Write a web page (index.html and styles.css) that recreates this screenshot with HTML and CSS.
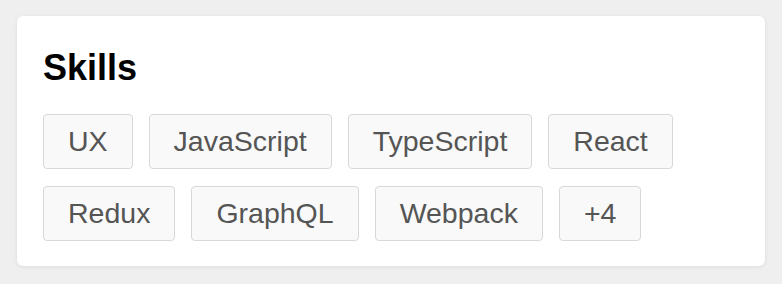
FILE: index.html
```html
<!DOCTYPE html>
<html>
<head>
<meta charset="utf-8">
<link rel="stylesheet" href="styles.css">
</head>
<body>
<section class="card">
  <h2 class="title">Skills</h2>
  <ul class="tags">
    <li class="tag">UX</li>
    <li class="tag">JavaScript</li>
    <li class="tag">TypeScript</li>
    <li class="tag">React</li>
    <li class="tag">Redux</li>
    <li class="tag">GraphQL</li>
    <li class="tag">Webpack</li>
    <li class="tag">+4</li>
  </ul>
</section>
</body>
</html>
```

FILE: styles.css
```css
html, body {
  margin: 0;
  padding: 0;
}
body {
  background: #efefef;
  font-family: "Liberation Sans", Arial, Helvetica, sans-serif;
  padding: 16px 17px;
}
.card {
  background: #fff;
  border-radius: 6px;
  box-shadow: 0 1px 4px rgba(0, 0, 0, 0.08);
  padding: 32px 26px 25px;
}
.title {
  margin: 0 0 26px;
  font-size: 36px;
  line-height: 40px;
  font-weight: 700;
  color: #000;
}
.tags {
  list-style: none;
  margin: 0;
  padding: 0;
  display: flex;
  flex-wrap: wrap;
  gap: 17px 16px;
}
.tag {
  border: 1px solid #d8d8d8;
  border-radius: 4px;
  background: #f9f9f9;
  color: #555;
  font-size: 28.5px;
  line-height: 29px;
  padding: 12px 24px;
}
```
